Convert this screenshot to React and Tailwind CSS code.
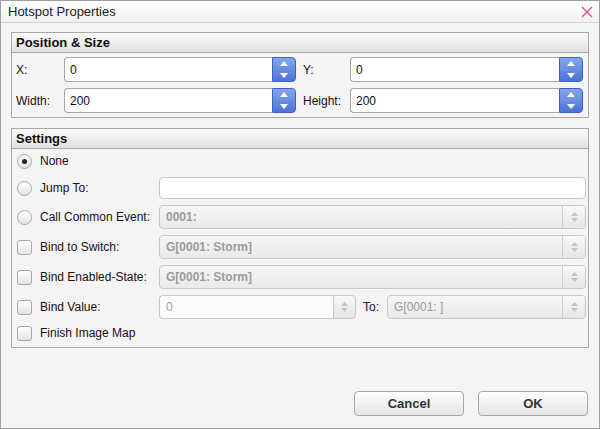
import React from 'react';

const font = { fontFamily: '"Liberation Sans", Arial, sans-serif' };

// blue up/down stepper used by the numeric inputs
const BlueSpin = () => (
  <div className="flex flex-col w-[24px] h-full rounded-r-[4px] border border-[#3c62c4] bg-gradient-to-b from-[#86a6ec] to-[#4b73d8] overflow-hidden">
    <div className="flex-1 flex items-center justify-center border-b border-[#6f90e0]">
      <svg width="8" height="5" viewBox="0 0 8 5"><path d="M0 5 L4 0 L8 5 Z" fill="#fff" /></svg>
    </div>
    <div className="flex-1 flex items-center justify-center">
      <svg width="8" height="5" viewBox="0 0 8 5"><path d="M0 0 L4 5 L8 0 Z" fill="#fff" /></svg>
    </div>
  </div>
);

// greyed stepper for disabled fields
const GreySpin = ({ bordered }) => (
  <div className={`flex flex-col w-[23px] h-full ${bordered ? 'border border-[#c8c8c8] rounded-r-[4px]' : 'border-l border-[#d0d0d0]'} bg-gradient-to-b from-[#f8f8f8] to-[#e6e6e6]`}>
    <div className="flex-1 flex items-end justify-center pb-[1px]">
      <svg width="7" height="4" viewBox="0 0 7 4"><path d="M0 4 L3.5 0 L7 4 Z" fill="#c4c4c4" /></svg>
    </div>
    <div className="flex-1 flex items-start justify-center pt-[1px]">
      <svg width="7" height="4" viewBox="0 0 7 4"><path d="M0 0 L3.5 4 L7 0 Z" fill="#c4c4c4" /></svg>
    </div>
  </div>
);

const NumberField = ({ value }) => (
  <div className="flex h-[25px] flex-1">
    <div className="flex-1 flex items-center pl-[5px] bg-white border border-r-0 border-[#a6a6a6] rounded-l-[4px] text-[12px] text-[#111]">
      {value}
    </div>
    <BlueSpin />
  </div>
);

const DisabledSelect = ({ value, bold = true, className = '' }) => (
  <div className={`flex h-[24px] border border-[#c8c8c8] rounded-[4px] bg-gradient-to-b from-[#f6f6f6] to-[#e9e9e9] overflow-hidden ${className}`}>
    <div className={`flex-1 flex items-center pl-[6px] text-[12px] text-[#9a9a9a] ${bold ? 'font-bold' : ''}`}>{value}</div>
    <GreySpin />
  </div>
);

const Radio = ({ checked }) => (
  <div className="w-[15px] h-[15px] rounded-full border border-[#a8a8a8] bg-gradient-to-b from-white to-[#e4e4e4] flex items-center justify-center shrink-0">
    {checked && <div className="w-[5px] h-[5px] rounded-full bg-[#222]" />}
  </div>
);

const Check = () => (
  <div className="w-[15px] h-[15px] rounded-[3px] border border-[#a8a8a8] bg-gradient-to-b from-white to-[#e4e4e4] shrink-0" />
);

const Row = ({ control, label, children, h = 'h-[24px]' }) => (
  <div className={`flex items-center ${h}`}>
    <div className="flex items-center gap-[8px] w-[142px] shrink-0">
      {control}
      <span className="text-[12px] text-[#1c1010]">{label}</span>
    </div>
    {children}
  </div>
);

const GroupHeader = ({ title }) => (
  <div className="h-[20px] flex items-center pl-[4px] border-b border-[#a8a8a8] bg-gradient-to-b from-[#fbfbfb] to-[#e2e2e2] text-[13px] font-bold text-[#111]">
    {title}
  </div>
);

export default function App() {
  return (
    <div style={font} className="w-[600px] h-[429px] flex flex-col bg-[#f4f4f4] border border-[#a0a0a0] overflow-hidden">
      {/* title bar */}
      <div className="h-[22px] shrink-0 flex items-center justify-between pl-[7px] pr-[6px] border-b border-[#d6d6d6] bg-gradient-to-b from-white to-[#f1f1f1]">
        <span className="text-[13px] text-[#222]">Hotspot Properties</span>
        <svg width="12" height="12" viewBox="0 0 12 12">
          <path d="M1 1 L11 11 M11 1 L1 11" stroke="#e8507f" strokeWidth="1.4" />
        </svg>
      </div>

      <div className="flex flex-col px-[10px] pt-[9px] gap-[10px]">
        {/* Position & Size */}
        <div className="border border-[#a8a8a8]">
          <GroupHeader title="Position & Size" />
          <div className="grid grid-cols-2 gap-x-[7px] gap-y-[6px] pl-[4px] pr-[5px] py-[4px]">
            <div className="flex items-center">
              <span className="w-[48px] text-[12px] text-[#1c1010]">X:</span>
              <NumberField value="0" />
            </div>
            <div className="flex items-center">
              <span className="w-[47px] text-[12px] text-[#1c1010]">Y:</span>
              <NumberField value="0" />
            </div>
            <div className="flex items-center">
              <span className="w-[48px] text-[12px] text-[#1c1010]">Width:</span>
              <NumberField value="200" />
            </div>
            <div className="flex items-center">
              <span className="w-[47px] text-[12px] text-[#1c1010]">Height:</span>
              <NumberField value="200" />
            </div>
          </div>
        </div>

        {/* Settings */}
        <div className="border border-[#a8a8a8]">
          <GroupHeader title="Settings" />
          <div className="flex flex-col gap-[6px] pl-[5px] pr-[2px] pt-[2px] pb-[6px]">
            <Row control={<Radio checked />} label="None" h="h-[20px]" />
            <Row control={<Radio />} label="Jump To:" h="h-[22px]">
              <div className="flex-1 h-[22px] bg-white border border-[#c8c8c8] rounded-[4px]" />
            </Row>
            <Row control={<Radio />} label="Call Common Event:">
              <DisabledSelect value="0001:" className="flex-1" />
            </Row>
            <Row control={<Check />} label="Bind to Switch:">
              <DisabledSelect value="G[0001: Storm]" className="flex-1" />
            </Row>
            <Row control={<Check />} label="Bind Enabled-State:">
              <DisabledSelect value="G[0001: Storm]" className="flex-1" />
            </Row>
            <Row control={<Check />} label="Bind Value:">
              <div className="flex h-[24px] w-[197px]">
                <div className="flex-1 flex items-center pl-[6px] bg-[#fbfbfb] border border-r-0 border-[#c8c8c8] rounded-l-[4px] text-[12px] text-[#a0a0a0]">0</div>
                <GreySpin bordered />
              </div>
              <span className="ml-[7px] w-[24px] text-[12px] text-[#1c1010]">To:</span>
              <DisabledSelect value="G[0001: ]" bold={false} className="flex-1" />
            </Row>
            <Row control={<Check />} label="Finish Image Map" h="h-[16px]" />
          </div>
        </div>
      </div>

      {/* footer buttons */}
      <div className="flex-1 flex items-end justify-end gap-[14px] pr-[11px] pb-[12px]">
        <button className="w-[110px] h-[25px] rounded-[4px] border border-[#a8a8a8] bg-gradient-to-b from-white to-[#e4e4e4] text-[13px] font-bold text-[#333]">Cancel</button>
        <button className="w-[110px] h-[25px] rounded-[4px] border border-[#a8a8a8] bg-gradient-to-b from-white to-[#e4e4e4] text-[13px] font-bold text-[#333]">OK</button>
      </div>
    </div>
  );
}
